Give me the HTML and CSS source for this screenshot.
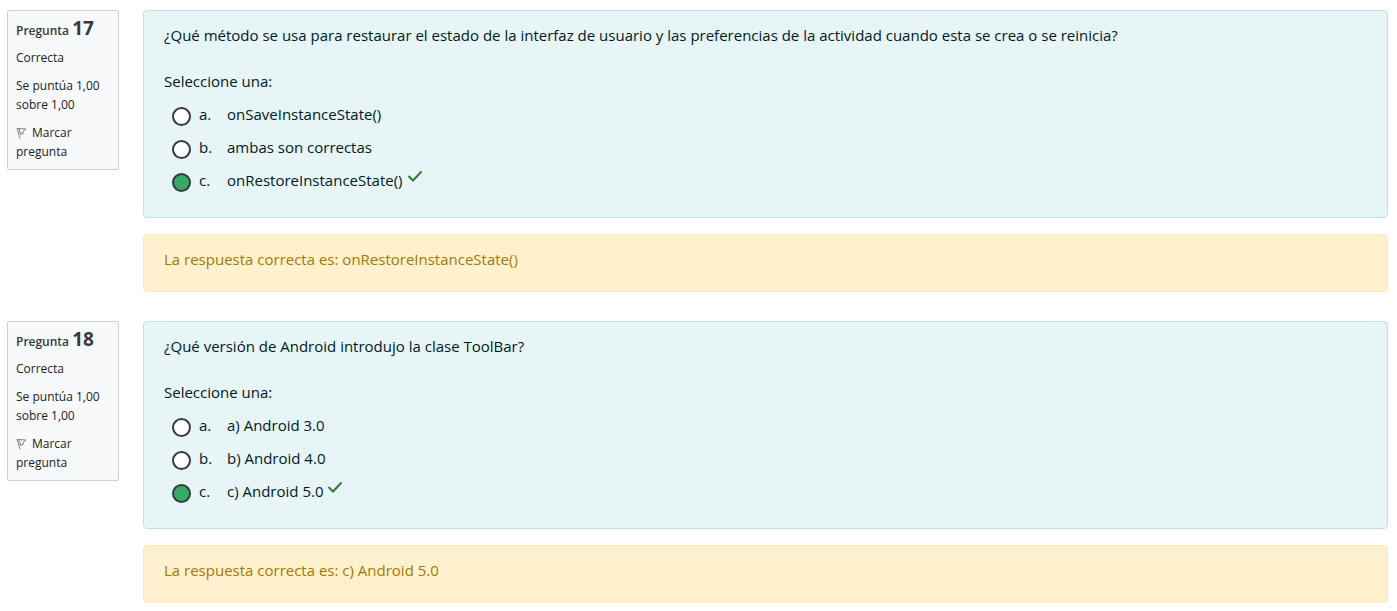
FILE: index.html
```html
<!DOCTYPE html>
<html lang="es">
<head>
<meta charset="utf-8">
<meta name="viewport" content="width=device-width, initial-scale=1">
<title>Revisión del cuestionario</title>
<link rel="stylesheet" href="styles.css">
</head>
<body>
<main class="quiz">
  <section class="question">
    <aside class="info">
      <h3 class="number">Pregunta <span class="qno">17</span></h3>
      <div class="state">Correcta</div>
      <div class="grade">Se puntúa 1,00 sobre 1,00</div>
      <a class="flag" href="#"><svg class="flag-icon" viewBox="0 0 12 12" aria-hidden="true"><path d="M1 1L4 11.5M2.5 1L5 7.5M1.5 1.5L10 2L7.5 4L7 6.5L3.5 7" fill="none" stroke="#808080" stroke-width="1"/></svg>Marcar pregunta</a>
    </aside>
    <div class="content">
      <div class="formulation">
        <p class="text">¿Qué método se usa para restaurar el estado de la interfaz de usuario y las preferencias de la actividad cuando esta se crea o se reinicia?</p>
        <fieldset class="options">
          <legend class="prompt">Seleccione una:</legend>
          <div class="option"><input class="radio" type="radio" name="q17" id="q17a"><label class="label" for="q17a"><span class="letter">a.</span><span>onSaveInstanceState()</span></label></div>
          <div class="option"><input class="radio" type="radio" name="q17" id="q17b"><label class="label" for="q17b"><span class="letter">b.</span><span>ambas son correctas</span></label></div>
          <div class="option"><input class="radio" type="radio" name="q17" id="q17c" checked><label class="label" for="q17c"><span class="letter">c.</span><span>onRestoreInstanceState()</span></label><svg class="check" viewBox="0 0 16 12" role="img" aria-label="Correcta"><path d="M1.5 6L6 10.5L14.5 1.5" fill="none" stroke="#357a32" stroke-width="2"/></svg></div>
        </fieldset>
      </div>
      <div class="outcome">La respuesta correcta es: onRestoreInstanceState()</div>
    </div>
  </section>
  <section class="question">
    <aside class="info">
      <h3 class="number">Pregunta <span class="qno">18</span></h3>
      <div class="state">Correcta</div>
      <div class="grade">Se puntúa 1,00 sobre 1,00</div>
      <a class="flag" href="#"><svg class="flag-icon" viewBox="0 0 12 12" aria-hidden="true"><path d="M1 1L4 11.5M2.5 1L5 7.5M1.5 1.5L10 2L7.5 4L7 6.5L3.5 7" fill="none" stroke="#808080" stroke-width="1"/></svg>Marcar pregunta</a>
    </aside>
    <div class="content">
      <div class="formulation">
        <p class="text">¿Qué versión de Android introdujo la clase ToolBar?</p>
        <fieldset class="options">
          <legend class="prompt">Seleccione una:</legend>
          <div class="option"><input class="radio" type="radio" name="q18" id="q18a"><label class="label" for="q18a"><span class="letter">a.</span><span>a) Android 3.0</span></label></div>
          <div class="option"><input class="radio" type="radio" name="q18" id="q18b"><label class="label" for="q18b"><span class="letter">b.</span><span>b) Android 4.0</span></label></div>
          <div class="option"><input class="radio" type="radio" name="q18" id="q18c" checked><label class="label" for="q18c"><span class="letter">c.</span><span>c) Android 5.0</span></label><svg class="check" viewBox="0 0 16 12" role="img" aria-label="Correcta"><path d="M1.5 6L6 10.5L14.5 1.5" fill="none" stroke="#357a32" stroke-width="2"/></svg></div>
        </fieldset>
      </div>
      <div class="outcome">La respuesta correcta es: c) Android 5.0</div>
    </div>
  </section>
</main>
</body>
</html>
```
FILE: styles.css
```css
* { box-sizing: border-box; }
body {
  margin: 0;
  background: #fff;
  color: #1d2125;
  font-family: "Open Sans", "Noto Sans", sans-serif;
  font-size: 15px;
  line-height: 23px;
}
.quiz {
  display: flex;
  flex-direction: column;
  gap: 29px;
  padding: 10px 9px 8px 7px;
}
.question {
  display: flex;
  align-items: flex-start;
  gap: 24px;
}
.info {
  display: flex;
  flex-direction: column;
  flex: none;
  width: 112px;
  padding: 8px;
  border: 1px solid #cad0d7;
  border-radius: 2px;
  background: #f8f9fa;
  font-size: 12px;
  line-height: 19px;
}
.number {
  margin: 0 0 6px;
  font-size: 12px;
  font-weight: 600;
  line-height: 23px;
  color: #343a40;
  white-space: nowrap;
}
.qno { font-size: 19px; font-weight: 700; line-height: 0; }
.state { margin-bottom: 9px; }
.grade { margin-bottom: 9px; }
.flag { color: inherit; text-decoration: none; }
.flag-icon {
  width: 12px;
  height: 12px;
  margin-right: 4px;
  vertical-align: -2px;
}
.content {
  display: flex;
  flex-direction: column;
  gap: 16px;
  flex: 1;
  min-width: 0;
}
.formulation {
  padding: 13px 20px 20px;
  border: 1px solid #b8e3e8;
  border-radius: 4px;
  background: #e7f5f7;
  color: #001a1e;
}
.text { margin: 0 0 23px; }
.options { margin: 0; padding: 0; border: 0; min-width: 0; }
.prompt { padding: 0; margin-bottom: 5px; }
.option {
  display: flex;
  align-items: center;
  height: 33px;
  padding-left: 8px;
}
.radio {
  appearance: none;
  flex: none;
  width: 19px;
  height: 19px;
  margin: 3px 8px 0 0;
  border: 2px solid #343a40;
  border-radius: 50%;
  background: #fff;
}
.radio:checked { background: #35aa62; }
.label { display: flex; }
.letter { width: 28px; }
.check {
  width: 16px;
  height: 12px;
  margin: 0 0 9px 4px;
}
.outcome {
  padding: 13px 20px 20px;
  border: 1px solid #fdeab8;
  border-radius: 4px;
  background: #fff1cd;
  color: #a37a00;
}
```
